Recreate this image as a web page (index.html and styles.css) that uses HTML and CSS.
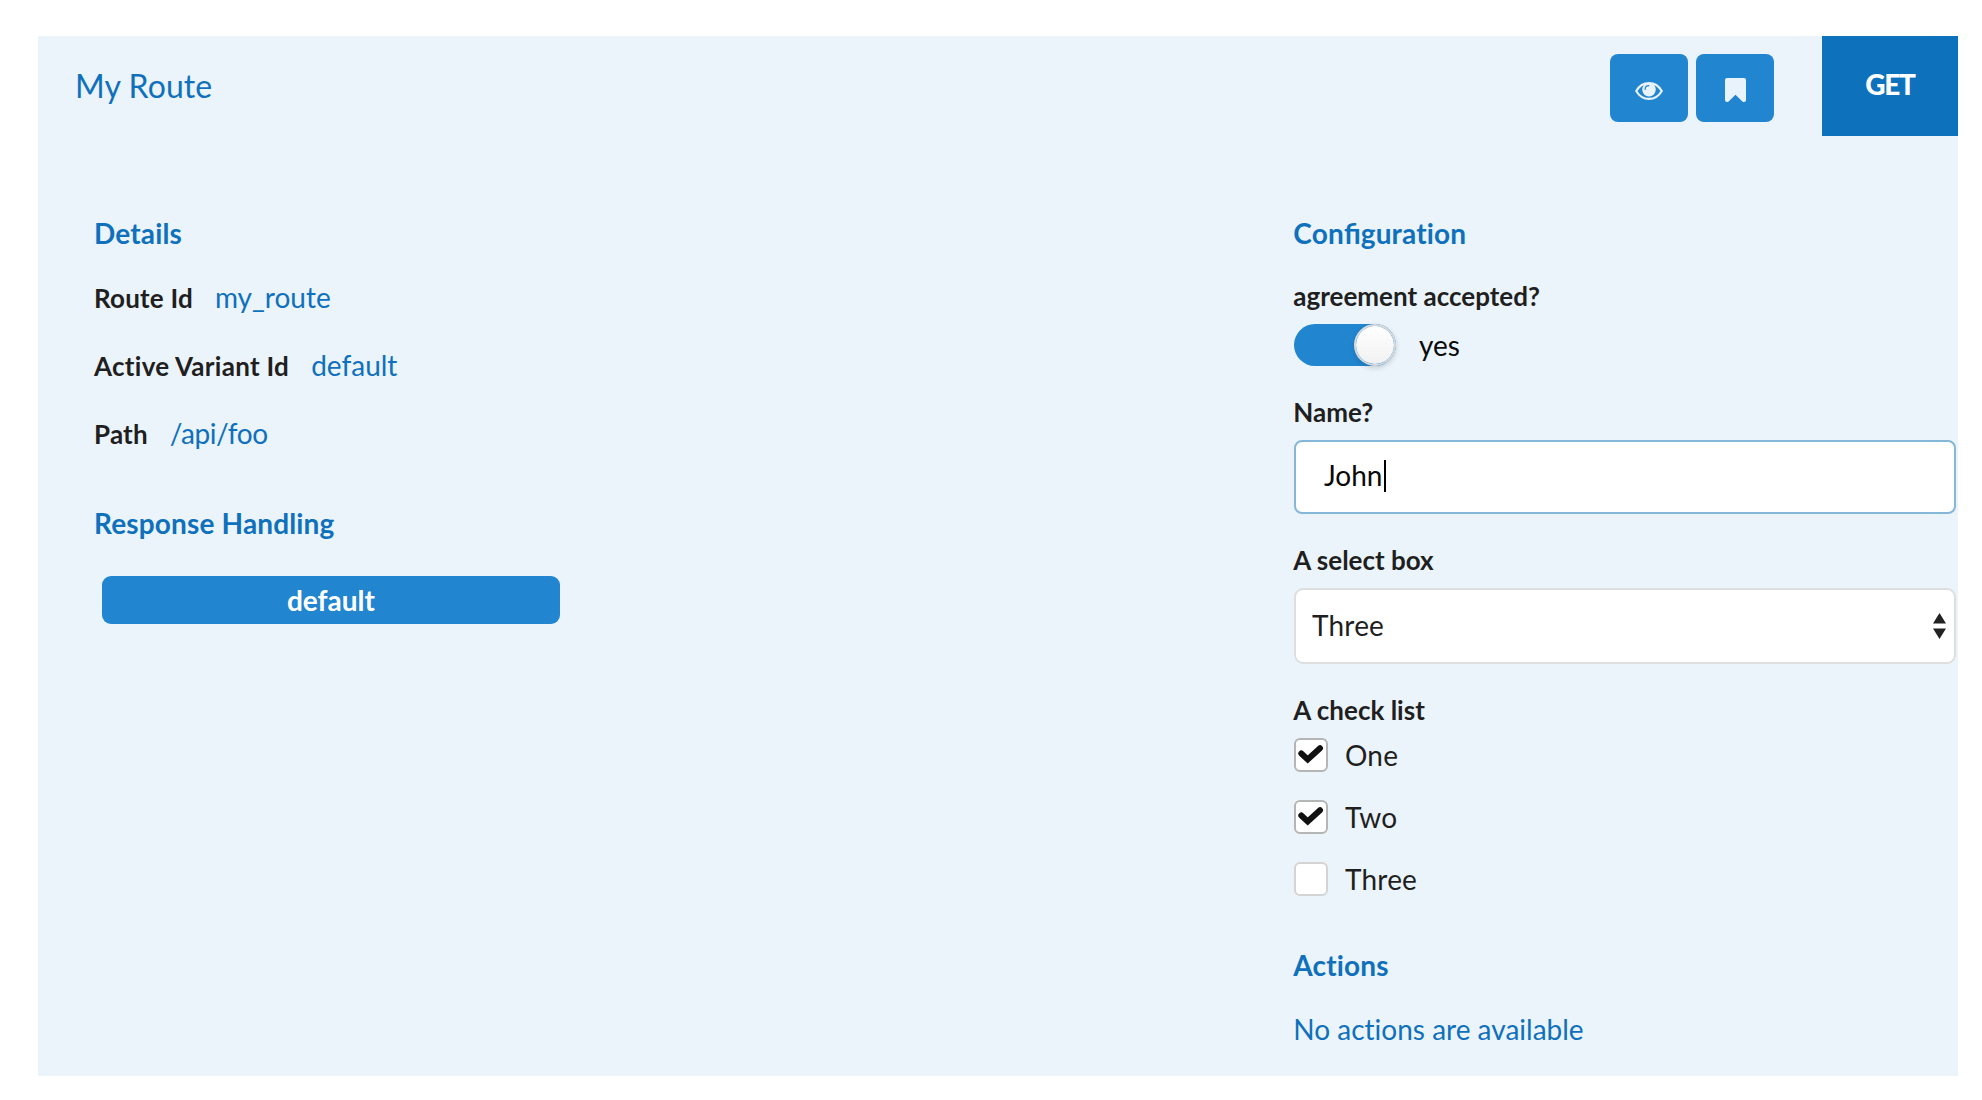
FILE: index.html
```html
<!DOCTYPE html>
<html lang="en">
<head>
<meta charset="utf-8">
<title>My Route</title>
<link rel="stylesheet" href="styles.css">
</head>
<body>
<main class="panel">
  <header class="header">
    <h1 class="title">My Route</h1>
    <div class="tools">
      <button class="icon-button" aria-label="View">
        <svg width="28" height="18" viewBox="0 0 28 18"><path d="M1.200 9C4 4.200 8.500 1.100 14 1.100s10 3.100 12.800 7.900c-2.800 4.800-7.300 7.900-12.800 7.900S4 13.800 1.200 9Z" fill="none" stroke="currentColor" stroke-width="2.100" stroke-linejoin="round"/><circle cx="14" cy="7.600" r="6.800" fill="currentColor"/><path d="M10.100 7.400c0-2.300 1.500-3.700 3.800-3.700" fill="none" stroke="#2185d0" stroke-width="1.200" stroke-linecap="round"/></svg>
      </button>
      <button class="icon-button" aria-label="Bookmark">
        <svg class="bookmark" width="21" height="24" viewBox="0 0 21 24"><path d="M2 0h17q2 0 2 2v20q0 2-2 2-1 0-1.600-.6L10.500 16.700l-6.900 6.700Q3 24 2 24q-2 0-2-2V2Q0 0 2 0Z" fill="currentColor"/></svg>
      </button>
    </div>
    <div class="method">GET</div>
  </header>
  <div class="columns">
    <section class="details">
      <h2 class="heading">Details</h2>
      <dl class="facts">
        <div class="fact"><dt>Route Id</dt><dd>my_route</dd></div>
        <div class="fact variant-fact"><dt>Active Variant Id</dt><dd>default</dd></div>
        <div class="fact"><dt>Path</dt><dd class="path">/api/foo</dd></div>
      </dl>
      <h2 class="heading">Response Handling</h2>
      <button class="variant">default</button>
    </section>
    <section class="config">
      <h2 class="heading">Con<span class="ligature">fi</span>guration</h2>
      <div class="field first">
        <div class="label">agreement accepted?</div>
        <div class="toggle-row"><span class="toggle"><span class="knob"></span></span><span class="yes">yes</span></div>
      </div>
      <div class="field">
        <div class="label">Name?</div>
        <div class="input"><span>John</span><span class="caret"></span></div>
      </div>
      <div class="field">
        <div class="label">A select box</div>
        <div class="select"><span>Three</span>
          <svg width="13" height="26" viewBox="0 0 13 26"><path d="M6.500 0 13 10.500H0ZM0 15.500h13L6.500 26Z" fill="#222"/></svg>
        </div>
      </div>
      <div class="field">
        <div class="label">A check list</div>
        <div class="checks">
          <div class="check"><span class="box checked"><svg width="26" height="20" viewBox="0 0 26 20"><path d="m3.300 9.500 6.400 5.900L22 4.200" fill="none" stroke="#111" stroke-width="6" stroke-linecap="round"/></svg></span>One</div>
          <div class="check"><span class="box checked"><svg width="26" height="20" viewBox="0 0 26 20"><path d="m3.300 9.500 6.400 5.900L22 4.200" fill="none" stroke="#111" stroke-width="6" stroke-linecap="round"/></svg></span>Two</div>
          <div class="check"><span class="box"></span>Three</div>
        </div>
      </div>
      <h2 class="heading actions">Actions</h2>
      <p class="empty">No actions are available</p>
    </section>
  </div>
</main>
</body>
</html>
```
FILE: styles.css
```css
* { box-sizing: border-box; margin: 0; padding: 0; }

body {
  padding: 36px 24px 0 38px;
  background: #fff;
  color: #1f1f1f;
  font: 28px/40px Lato, sans-serif;
  font-variant-ligatures: none;
}

.panel { height: 1040px; background: #ebf4fb; }

.header { display: flex; height: 100px; }
.title {
  flex: 1;
  padding: 26px 0 0 37px;
  color: #0f70bc;
  font-size: 32px;
  font-weight: 400;
  letter-spacing: .1px;
  line-height: 48px;
}

.tools { display: flex; gap: 8px; padding: 18px 48px 0 0; }
.icon-button {
  display: flex;
  justify-content: center;
  width: 78px;
  height: 68px;
  padding-top: 28px;
  border: 0;
  border-radius: 8px;
  background: #2185d0;
  color: #e8f3fb;
}
.icon-button .bookmark { margin-top: -4px; }

.method {
  width: 136px;
  padding-top: 28px;
  background: #0d71bb;
  color: #fff;
  font-weight: 900;
  letter-spacing: -1.3px;
  text-align: center;
}

.columns { display: flex; justify-content: space-between; padding: 77px 2px 0 56px; }
.details { width: 466px; }
.config { width: 662px; }

.heading { color: #0f70bc; font-size: 28px; font-weight: 700; letter-spacing: .15px; line-height: 40px; }
.ligature { font-variant-ligatures: common-ligatures; letter-spacing: 0; }
.config .heading, .label { text-indent: -.7px; }

.facts { display: grid; gap: 28px; margin: 24px 0 50px; }
.fact { display: flex; align-items: baseline; gap: 22px; height: 40px; }
.fact dt { font-size: 26px; font-weight: 700; letter-spacing: .2px; }
.variant-fact dt { letter-spacing: .28px; }
.fact dd { color: #0f70bc; }
.path { letter-spacing: -.45px; }

.variant {
  display: block;
  width: 458px;
  height: 48px;
  margin: 33px 0 0 8px;
  border: 0;
  border-radius: 9px;
  background: #2185d0;
  color: #fff;
  font: 700 28px/46px Lato, sans-serif;
}

.field { margin-top: 28px; }
.field.first { margin-top: 25px; }
.label { margin-bottom: 10px; font-size: 26px; font-weight: 700; line-height: 36px; }

.toggle-row { display: flex; height: 42px; }
.toggle {
  display: flex;
  justify-content: flex-end;
  width: 102px;
  border-radius: 21px;
  background: #2185d0;
}
.knob {
  width: 42px;
  height: 42px;
  border: 2px solid #d8dadc;
  border-radius: 50%;
  background: linear-gradient(#fff, #f1f1f1) padding-box;
  box-shadow: 0 2px 5px rgba(34, 36, 38, .18);
}
.yes { margin: 1px 0 0 23px; color: #0a0a0a; }

.input {
  display: flex;
  height: 74px;
  padding: 13px 28px 0;
  border: 2px solid #85b7d9;
  border-radius: 8px;
  background: #fff;
  color: #0a0a0a;
}
.caret { width: 2px; height: 32px; margin: 5px 0 0 2px; background: #000; }

.select {
  display: flex;
  justify-content: space-between;
  height: 76px;
  padding: 15px 8px 0 16px;
  border: 2px solid #dedede;
  border-radius: 9px;
  background: #fff;
  letter-spacing: .2px;
}
.select svg { margin-top: 8px; }

.checks { display: grid; gap: 28px; }
.check { display: flex; gap: 17px; height: 34px; letter-spacing: .2px; line-height: 34px; }
.box {
  width: 34px;
  height: 34px;
  border: 2px solid #d4d4d5;
  border-radius: 6px;
  background: #fff;
}
.box.checked { border-color: #b4b5b5; }
.box svg { display: block; margin: 4px 0 0 2px; }

.actions { margin-top: 49px; }
.empty { margin-top: 24px; color: #0f70bc; text-indent: -.7px; }
```
